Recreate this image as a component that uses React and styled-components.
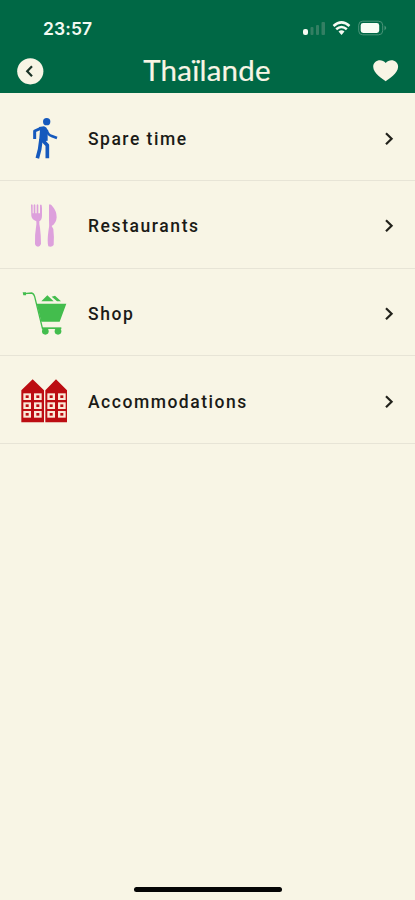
import React from 'react';
import styled, { createGlobalStyle } from 'styled-components';

const GlobalStyle = createGlobalStyle`
  * {
    box-sizing: border-box;
  }
  body {
    margin: 0;
    background: #f8f5e5;
  }
`;

const Screen = styled.div`
  display: flex;
  flex-direction: column;
  width: 100%;
  height: 100vh;
  background: #f8f5e5;
  overflow: hidden;
`;

const Header = styled.header`
  height: 93.4px;
  background: #006845;
  color: #f8f5e5;
`;

const StatusBar = styled.div`
  display: flex;
  align-items: center;
  justify-content: space-between;
  height: 48px;
  padding: 8px 27px 0 43px;
`;

const Clock = styled.span`
  padding-top: 1px;
  font: 600 17.5px/20px Inter, sans-serif;
  letter-spacing: 0.1px;
  color: #f3faf2;
`;

const StatusIcons = styled.svg`
  display: block;
  width: 87px;
  height: 20px;
`;

const NavBar = styled.div`
  display: grid;
  grid-template-columns: 28px 1fr 28px;
  align-items: center;
  height: 45px;
  padding: 0 15px 0 16px;
`;

const NavButton = styled.button`
  display: block;
  width: 28px;
  height: 28px;
  padding: 0;
  border: 0;
  background: none;

  svg {
    display: block;
  }
`;

const Title = styled.h1`
  margin: 0;
  padding: 0 2px 2px 0;
  text-align: center;
  font: 400 29.5px/44px Lato, sans-serif;
  letter-spacing: 0.2px;
  -webkit-text-stroke: 0.2px #f8f5e5;
  color: #f8f5e5;
`;

const List = styled.ul`
  flex: 1;
  margin: 0;
  padding: 0;
  list-style: none;
`;

const Row = styled.li`
  display: flex;
  align-items: center;
  height: 87.65px;
  padding: 4px 19px 0 20px;
  border-bottom: 1.5px solid #e7e4d6;
`;

const RowIcon = styled.svg`
  flex: none;
  width: 48px;
  height: 48px;
  color: ${(props) => props.$color};
`;

const Label = styled.span`
  flex: 1;
  margin-left: 20px;
  font: 500 17.5px/24px Roboto, sans-serif;
  letter-spacing: ${(props) => props.$spacing}px;
  color: #1b1b17;
`;

const Chevron = styled.svg`
  width: 14px;
  height: 18px;
`;

const HomeArea = styled.footer`
  display: flex;
  justify-content: center;
  height: 14px;
`;

const HomeBar = styled.div`
  width: 148px;
  height: 5px;
  margin-top: 1px;
  border-radius: 3px;
  background: #050505;
`;

const Walker = () => (
  <g fill="none" stroke="currentColor" strokeLinejoin="round">
    <circle cx="110" cy="51" r="11" fill="currentColor" stroke="none" />
    <path d="M87 67 L102 65 Q110 67 113 76 L113 108 L87 111 L90 76 Z" fill="currentColor" stroke="none" />
    <path d="M92 71 L74 79 V103" strokeWidth="9" />
    <path d="M110 76 Q114 91 125 94 L141 100" strokeWidth="8" />
    <path d="M93 104 L89 134 L82 161" strokeWidth="11" />
    <path d="M97 106 L112 122 V161" strokeWidth="11" />
  </g>
);

const Cutlery = () => (
  <g fill="currentColor">
    <path d="M63 39 Q65 35 68 39 V64 H71 V39 Q74 35 76 39 V64 H80 V39 Q82 35 85 39 V64 H90 V40 Q93 35 95 40 L96 48 V71 Q96 83 88 88 Q87 96 90 107 Q93 132 93 156 Q90 164 84 164 Q77 164 75 157 Q74 128 78 106 Q80 95 79 88 Q66 83 64 72 Z" />
    <path d="M117 38 Q122 34 129 45 Q140 58 140 76 Q139 94 125 102 L130 111 Q133 136 131 159 Q126 166 115 163 Q111 148 115 119 Q119 105 117 85 Z" />
  </g>
);

const Cart = () => (
  <g fill="currentColor">
    <path d="M43 40 L65 38 Q71 39 74 49 L98 147" fill="none" stroke="currentColor" strokeWidth="4" />
    <path d="M38 36 H48 V45 H40 Z M80 70 H169 L149 124 H94 Z" />
    <path d="M94 63 L112 45 L131 63 Z M125 49 L135 46 L153 63 H141 Z" />
    <path d="M96 141 H154 V146 H96 Z" />
    <circle cx="106" cy="153" r="10" />
    <circle cx="144" cy="153" r="10" />
  </g>
);

const windowColumns = [40, 72, 112, 144];
const windowRows = [80, 107, 133];

const Houses = () => (
  <g>
    <path d="M34 71 L68 38 L102 71 V167 H34 Z M106 71 L138 38 L171 71 V167 H106 Z" fill="currentColor" />
    {windowRows.map((y) =>
      windowColumns.map((x) => (
        <g key={`${x}-${y}`}>
          <rect x={x} y={y} width="23" height="20" fill="#fae9d8" />
          <rect x={x + 7} y={y + 6} width="9" height="8" fill="currentColor" />
        </g>
      ))
    )}
  </g>
);

const categories = [
  { name: 'Spare time', icon: Walker, color: '#1559bd', viewBox: '30 31 144 144', spacing: 1.5 },
  { name: 'Restaurants', icon: Cutlery, color: '#dda0dc', viewBox: '30 30 144 144', spacing: 1.58 },
  { name: 'Shop', icon: Cart, color: '#43bd4d', viewBox: '30 29 144 144', spacing: 1.6 },
  { name: 'Accommodations', icon: Houses, color: '#bc0d12', viewBox: '30 34 144 144', spacing: 1.52 }
];

function TopBar() {
  return (
    <Header>
      <StatusBar>
        <Clock>23:57</Clock>
        <StatusIcons viewBox="0 0 87 20">
          <rect x="2" y="11" width="5" height="6" rx="2" fill="#f6faf2" />
          <g fill="#337f63">
            <rect x="9.5" y="9" width="3" height="8" rx="1" />
            <rect x="15" y="7" width="3" height="10" rx="1" />
            <rect x="20.5" y="4" width="3.5" height="13" rx="1" />
          </g>
          <g fill="none" stroke="#f6faf2" strokeWidth="2.5">
            <path d="M32.5 8 Q40.5 0.8 48.5 8" />
            <path d="M35.2 11.3 Q40.5 6.6 45.8 11.3" />
          </g>
          <path d="M37.5 13.5 Q40.5 10.9 43.5 13.5 L40.5 17 Z" fill="#f6faf2" />
          <rect x="57.7" y="3.2" width="24" height="13.6" rx="4" fill="none" stroke="#4b9479" />
          <rect x="59.7" y="5" width="18.5" height="10" rx="2.4" fill="#f8fcf4" />
          <path d="M83.5 7.6 Q87 10 83.5 12.4 Z" fill="#4b9479" />
        </StatusIcons>
      </StatusBar>
      <NavBar>
        <NavButton aria-label="Back">
          <svg width="28" height="28" viewBox="0 0 28 28">
            <circle cx="14.3" cy="14.3" r="13.1" fill="#f8f5e5" />
            <path d="M16 9.2 L11.2 14.2 L16 19.2" fill="none" stroke="#1b3327" strokeWidth="2.2" />
          </svg>
        </NavButton>
        <Title>Thaïlande</Title>
        <NavButton aria-label="Favourite">
          <svg width="28" height="28" viewBox="0 0 28 28">
            <path
              d="M13.7 24.3 C11 22 1.2 16.5 1.2 9.8 C1.2 3.2 9.6 1 13.7 6 C17.8 1 26.1 3.2 26.1 9.8 C26.1 16.5 16.4 22 13.7 24.3 Z"
              fill="#f8f5e5"
            />
          </svg>
        </NavButton>
      </NavBar>
    </Header>
  );
}

function App() {
  return (
    <>
      <GlobalStyle />
      <Screen>
        <TopBar />
        <List>
          {categories.map(({ name, icon: Icon, color, viewBox, spacing }) => (
            <Row key={name}>
              <RowIcon $color={color} viewBox={viewBox}>
                <Icon />
              </RowIcon>
              <Label $spacing={spacing}>{name}</Label>
              <Chevron viewBox="0 0 14 18">
                <path d="M4 3.3 L9.6 8.8 L4 14.3" fill="none" stroke="#22221b" strokeWidth="2.2" />
              </Chevron>
            </Row>
          ))}
        </List>
        <HomeArea>
          <HomeBar />
        </HomeArea>
      </Screen>
    </>
  );
}

export default App;
